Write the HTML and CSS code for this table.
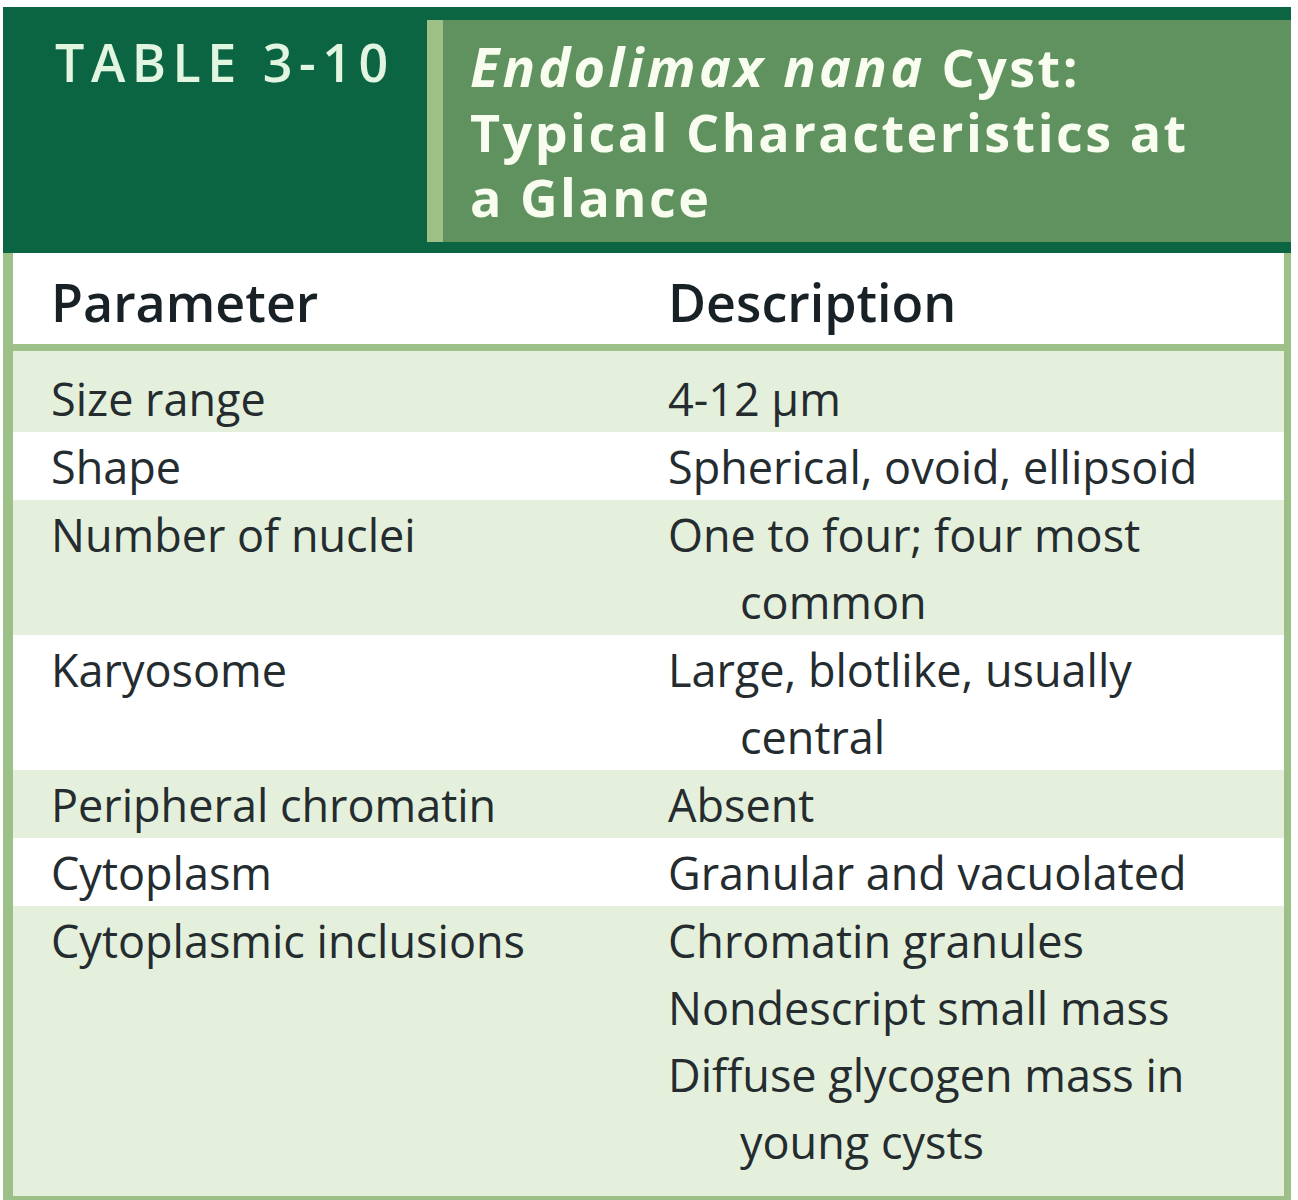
FILE: index.html
```html
<!DOCTYPE html>
<html lang="en">
<head>
<meta charset="utf-8">
<title>Table 3-10 Endolimax nana Cyst</title>
<link rel="stylesheet" href="styles.css">
</head>
<body>
<div class="sheet">
  <div class="head">
    <div class="num">TABLE 3-10</div>
    <div class="title"><em>Endolimax nana</em> Cyst:<br>Typical Characteristics at<br>a Glance</div>
  </div>
  <div class="body">
    <div class="row colhead">
      <div class="c1">Parameter</div>
      <div class="c2">Description</div>
    </div>
    <div class="row tint first">
      <div class="c1">Size range</div>
      <div class="c2">4-12 μm</div>
    </div>
    <div class="row">
      <div class="c1">Shape</div>
      <div class="c2">Spherical, ovoid, ellipsoid</div>
    </div>
    <div class="row tint">
      <div class="c1">Number of nuclei</div>
      <div class="c2">One to four; four most<br>common</div>
    </div>
    <div class="row">
      <div class="c1">Karyosome</div>
      <div class="c2">Large, blotlike, usually<br>central</div>
    </div>
    <div class="row tint">
      <div class="c1">Peripheral chromatin</div>
      <div class="c2">Absent</div>
    </div>
    <div class="row">
      <div class="c1">Cytoplasm</div>
      <div class="c2">Granular and vacuolated</div>
    </div>
    <div class="row tint last">
      <div class="c1">Cytoplasmic inclusions</div>
      <div class="c2 list">
        <div class="item">Chromatin granules</div>
        <div class="item">Nondescript small mass</div>
        <div class="item">Diffuse glycogen mass in<br>young cysts</div>
      </div>
    </div>
  </div>
</div>
</body>
</html>
```

FILE: styles.css
```css
html, body {
  margin: 0;
  padding: 0;
  background: #ffffff;
}

body {
  font-family: "Open Sans", "Noto Sans", "Liberation Sans", sans-serif;
}

.sheet {
  width: 1288px;
  margin: 7px 0 0 3px;
}

.head {
  display: flex;
  height: 246px;
  box-sizing: border-box;
  padding: 13px 0 11px 0;
  background: #0b6542;
}

.num {
  width: 424px;
  box-sizing: border-box;
  padding: 9px 0 0 52px;
  font-size: 52px;
  line-height: 65px;
  font-weight: 600;
  letter-spacing: 6.5px;
  color: #e2f5e0;
  white-space: nowrap;
}

.title {
  flex: 1;
  border-left: 16px solid #9cc086;
  background: #5f925e;
  padding: 14px 0 0 27px;
  font-size: 52px;
  line-height: 65px;
  font-weight: 700;
  letter-spacing: 2.5px;
  color: #f8fdf0;
  white-space: nowrap;
}

.title em {
  font-style: italic;
  font-size: 54px;
  letter-spacing: 3.2px;
}

.body {
  border-left: 10px solid #9dbf88;
  border-right: 7px solid #9dbf88;
  border-bottom: 5px solid #9dbf88;
  background: #ffffff;
}

.row {
  display: grid;
  grid-template-columns: 655px 1fr;
  font-size: 45px;
  line-height: 67px;
  color: #242c2f;
  padding-top: 1px;
}

.row.tint {
  background: #e4f0dc;
}

.row.first {
  padding-top: 14px;
}

.row.last {
  padding-bottom: 21px;
}

.colhead {
  height: 98px;
  box-sizing: border-box;
  padding-top: 6px;
  line-height: 85px;
  font-size: 52px;
  font-weight: 600;
  color: #182226;
  border-bottom: 7px solid #9dbf88;
}

.c1 {
  padding-left: 38px;
  white-space: nowrap;
}

.c2 {
  padding-left: 72px;
  text-indent: -72px;
  white-space: nowrap;
}

.colhead .c2 {
  padding-left: 0;
  text-indent: 0;
}

.list {
  padding-left: 0;
  text-indent: 0;
}

.item {
  padding-left: 72px;
  text-indent: -72px;
}
```
